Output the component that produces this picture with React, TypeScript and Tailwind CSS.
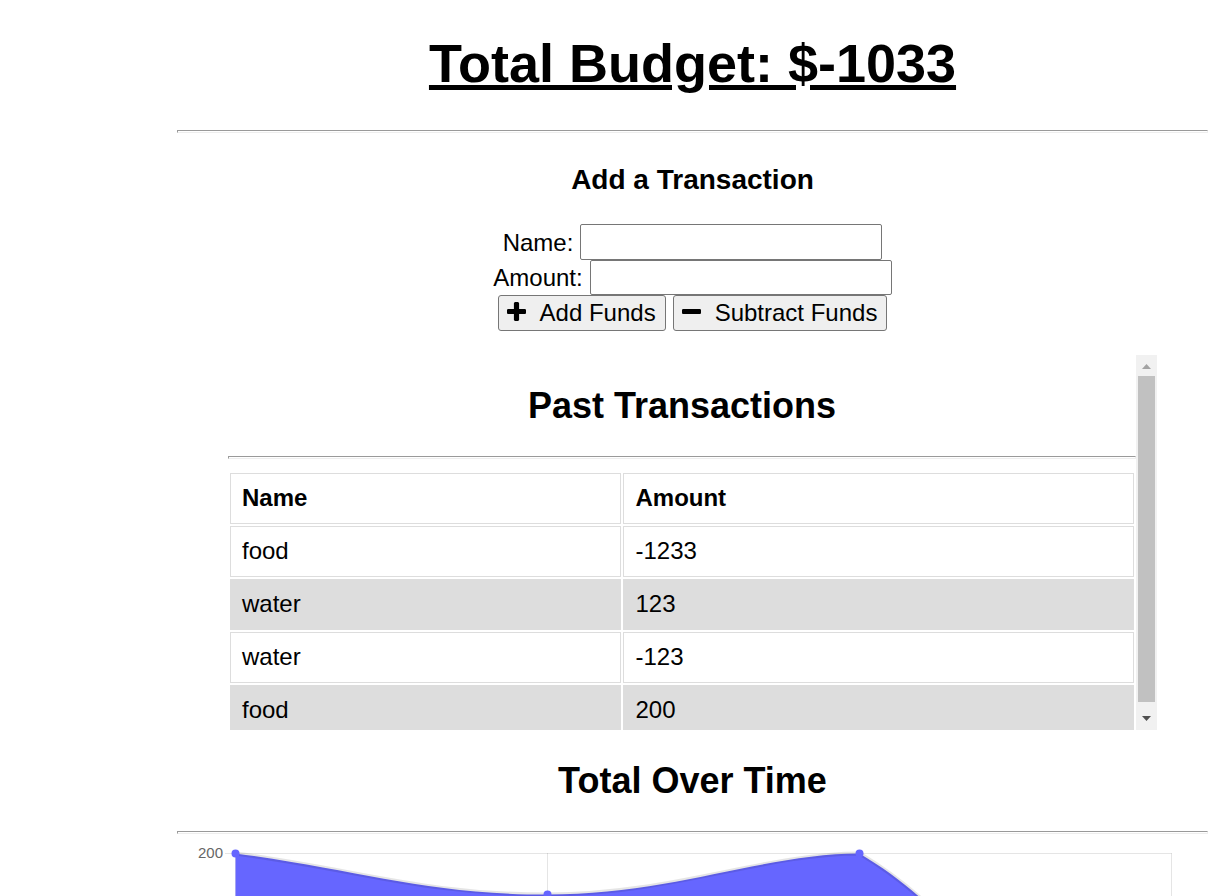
import React from "react";

const transactions = [
  { name: "food", amount: -1233 },
  { name: "water", amount: 123 },
  { name: "water", amount: -123 },
  { name: "food", amount: 200 },
];

function Divider() {
  return (
    <hr className="h-[3px] w-full border border-t-[#9a9a9a] border-r-[#eeeeee] border-b-[#eeeeee] border-l-[#9a9a9a]" />
  );
}

function PlusIcon() {
  return (
    <svg
      aria-hidden="true"
      viewBox="192 128 1408 1408"
      fill="currentColor"
      className="mr-[14px] mb-[3px] h-[19px] w-[19px]"
    >
      <path d="M1600 736v192q0 40-28 68t-68 28h-416v416q0 40-28 68t-68 28h-192q-40 0-68-28t-28-68v-416h-416q-40 0-68-28t-28-68v-192q0-40 28-68t68-28h416v-416q0-40 28-68t68-28h192q40 0 68 28t28 68v416h416q40 0 68 28t28 68z" />
    </svg>
  );
}

function MinusIcon() {
  return (
    <svg
      aria-hidden="true"
      viewBox="192 128 1408 1408"
      fill="currentColor"
      className="mr-[14px] mb-[3px] h-[19px] w-[19px]"
    >
      <path d="M1600 736v192q0 40-28 68t-68 28h-1216q-40 0-68-28t-28-68v-192q0-40 28-68t68-28h1216q40 0 68 28t28 68z" />
    </svg>
  );
}

function TransactionForm() {
  const input = "w-[302px] rounded-[2px] border border-[#767676] bg-white px-1";
  const button =
    "flex h-9 items-center rounded-[3px] border border-[#767676] bg-[#efefef] pr-[9px] pl-2 leading-7";
  return (
    <form className="flex flex-col items-center" onSubmit={(e) => e.preventDefault()}>
      <div className="flex items-center gap-[7px]">
        <label htmlFor="name">Name:</label>
        <input id="name" type="text" className={`h-9 ${input}`} />
      </div>
      <div className="flex items-center gap-[7px]">
        <label htmlFor="amount">Amount:</label>
        <input id="amount" type="text" className={`h-[35px] ${input}`} />
      </div>
      <div className="flex gap-[7px]">
        <button type="submit" className={button}>
          <PlusIcon />
          Add Funds
        </button>
        <button type="submit" className={button}>
          <MinusIcon />
          Subtract Funds
        </button>
      </div>
    </form>
  );
}

function Scrollbar() {
  return (
    <div aria-hidden="true" className="flex w-[21px] shrink-0 flex-col bg-[#f1f1f1]">
      <div className="flex h-[21px] items-center justify-center pt-[2px]">
        <svg width="9" height="5" viewBox="0 0 9 5">
          <path d="M4.5 0 9 5H0Z" fill="#a3a3a3" />
        </svg>
      </div>
      <div className="mx-[2px] grow bg-[#c1c1c1]" />
      <div className="flex h-7 items-center justify-center pt-[5px]">
        <svg width="9" height="5" viewBox="0 0 9 5">
          <path d="M0 0H9L4.5 5Z" fill="#505050" />
        </svg>
      </div>
    </div>
  );
}

function PastTransactions() {
  const cell = "border border-[#dddddd] px-[11px] pt-[10px] pb-3 text-left leading-[27px]";
  return (
    <section className="mx-[51px] mt-6 flex h-[375px]">
      <div className="min-w-0 grow overflow-hidden">
        <h2 className="mt-[30px] mb-[30px] text-center text-4xl leading-[41px] font-bold">
          Past Transactions
        </h2>
        <Divider />
        <table className="mt-3 w-full border-separate border-spacing-[2px]">
          <thead>
            <tr>
              <th className={`w-[43.4%] ${cell}`}>Name</th>
              <th className={cell}>Amount</th>
            </tr>
          </thead>
          <tbody>
            {transactions.map((t, i) => (
              <tr key={i} className="even:bg-[#dddddd]">
                <td className={cell}>{t.name}</td>
                <td className={cell}>{t.amount}</td>
              </tr>
            ))}
          </tbody>
        </table>
      </div>
      <Scrollbar />
    </section>
  );
}

function BudgetChart() {
  const curve =
    "M58.5 10.5C183 27 246 51.5 370.5 51.5S588 10.5 682.5 10.5C837 102 869 257 994.5 421.5";
  return (
    <svg viewBox="0 0 1031 515" className="block w-full" role="img" aria-label="Total Over Time">
      <g stroke="#000000" strokeOpacity="0.1" fill="none">
        <path d="M48 10.5H994.5M58.5 10V432M370.5 10V432M682.5 10V432M994.5 10V432" />
      </g>
      <text
        x="46"
        y="15"
        textAnchor="end"
        fill="#666666"
        fontSize="15"
        fontFamily="'Liberation Sans', sans-serif"
      >
        200
      </text>
      <path d={`${curve}V77H58.5Z`} fill="#6666ff" />
      <path d={curve} fill="none" stroke="#000000" strokeOpacity="0.1" strokeWidth="4" />
      <g fill="#6666ff">
        <circle cx="58.5" cy="10.5" r="4" />
        <circle cx="370.5" cy="51.5" r="4" />
        <circle cx="682.5" cy="10.5" r="4" />
        <circle cx="994.5" cy="421.5" r="4" />
      </g>
    </svg>
  );
}

export default function App() {
  return (
    <div className="h-screen overflow-hidden bg-white font-['Liberation_Sans',Arial,sans-serif] text-2xl leading-[27px] text-black">
      <main className="ml-[177px]">
        <h1 className="pt-8 pb-9 text-center text-[54px] leading-[62px] font-bold underline">
          Total Budget: $-1033
        </h1>
        <Divider />
        <h3 className="mt-[31px] mb-7 text-center text-[28px] leading-8 font-bold">
          Add a Transaction
        </h3>
        <TransactionForm />
        <PastTransactions />
        <h2 className="my-[30px] text-center text-4xl leading-[41px] font-bold">
          Total Over Time
        </h2>
        <Divider />
        <div className="mt-[9px]">
          <BudgetChart />
        </div>
      </main>
    </div>
  );
}
